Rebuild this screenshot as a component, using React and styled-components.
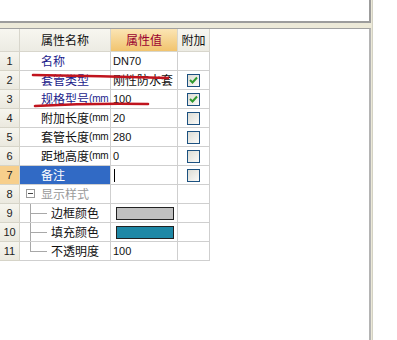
import React from "react";
import styled, { createGlobalStyle } from "styled-components";

const Global = createGlobalStyle`
  html, body { margin: 0; padding: 0; background: #fff; }
  body { width: 397px; height: 340px; overflow: hidden; font-family: "Noto Sans CJK SC", "Liberation Sans", sans-serif; }
`;

const Page = styled.div`
  display: flex;
  width: 397px;
  height: 340px;
  background: #fff;
`;

const LeftCol = styled.div`
  width: 373px;
  display: flex;
  flex-direction: column;
  background: #ece9d8;
  border-right: 1px solid #d4d2c4;
  box-sizing: border-box;
`;

const TopPanel = styled.div`
  height: 23px;
  margin-right: 1px;
  background: #fff;
  border-right: 2px solid #9c9c9c;
  border-bottom: 2px solid #9c9c9c;
  box-sizing: border-box;
`;

const Strip = styled.div`
  height: 5px;
`;

const GridPanel = styled.div`
  position: relative;
  flex: 1;
  margin-right: 1px;
  background: #fff;
  border-top: 1px solid #a0a0a0;
  border-right: 2px solid #b4b4b4;
`;

const Grid = styled.div`
  display: grid;
  grid-template-columns: 20px 91px 67px 32px;
  grid-template-rows: 23px;
  grid-auto-rows: 19px;
  width: 210px;
`;

const Cell = styled.div`
  box-sizing: border-box;
  border-right: 1px solid #cfcfcf;
  border-bottom: 1px solid #cfcfcf;
  font-size: 12px;
  line-height: 18px;
  white-space: nowrap;
  overflow: hidden;
  display: flex;
  align-items: center;
  position: relative;
`;

const HeadCell = styled(Cell)`
  justify-content: center;
  background: ${(p) =>
    p.$active ? "linear-gradient(#fbe5b4, #f1c46e)" : "linear-gradient(#f7f6f0, #ecebe3)"};
  color: ${(p) => (p.$active ? "#9a0030" : "#111")};
  border-right-color: #d8d6cc;
  border-bottom-color: #d8d6cc;
`;

const NumCell = styled(Cell)`
  justify-content: center;
  background: ${(p) => (p.$active ? "#f7cf8c" : "linear-gradient(#f6f5ee, #ebe9df)")};
  color: #222;
  font-family: "Liberation Sans", sans-serif;
  font-size: 11px;
  border-right-color: #d6d4c8;
  border-bottom-color: #d6d4c8;
`;

const NameCell = styled(Cell)`
  padding-left: ${(p) => (p.$indent ? "31px" : "21px")};
  background: ${(p) => (p.$selected ? "#316ac5" : "#fff")};
  color: ${(p) => (p.$selected ? "#fff" : p.$blue ? "#1c1c8c" : p.$muted ? "#9a9a9a" : "#111")};
`;

const Unit = styled.span`
  font-family: "Liberation Sans", sans-serif;
  font-size: 10px;
  letter-spacing: -0.2px;
`;

const ValueCell = styled(Cell)`
  padding-left: 2px;
  color: #111;
  font-family: ${(p) =>
    p.$cjk ? `"Noto Sans CJK SC", sans-serif` : `"Liberation Sans", sans-serif`};
  font-size: ${(p) => (p.$cjk ? "12px" : "11px")};
`;

const ExtraCell = styled(Cell)`
  justify-content: center;
`;

const Check = styled.div`
  width: 13px;
  height: 13px;
  box-sizing: border-box;
  border: 1px solid #1c5180;
  background: linear-gradient(135deg, #dcdcd4, #fafaf8);
  display: flex;
  align-items: center;
  justify-content: center;
`;

const Swatch = styled.div`
  width: 58px;
  height: 13px;
  box-sizing: border-box;
  border: 1px solid #222;
  background: ${(p) => p.$color};
  margin-left: 3px;
`;

const Caret = styled.span`
  width: 1px;
  height: 13px;
  background: #000;
  margin-left: 1px;
`;

const Toggle = styled.span`
  position: absolute;
  left: 6px;
  top: 4px;
  width: 9px;
  height: 9px;
  box-sizing: border-box;
  border: 1px solid #9a9a9a;
  background: #fff;
  &::after {
    content: "";
    position: absolute;
    left: 1px;
    top: 3px;
    width: 5px;
    height: 1px;
    background: #444;
  }
`;

const TreeV = styled.span`
  position: absolute;
  left: 10px;
  top: 0;
  height: ${(p) => (p.$last ? "9px" : "19px")};
  width: 1px;
  background: #a8a8a8;
`;

const TreeH = styled.span`
  position: absolute;
  left: 10px;
  top: 9px;
  width: 17px;
  height: 1px;
  background: #a8a8a8;
`;

const Marks = styled.svg`
  position: absolute;
  left: 0;
  top: 0;
  pointer-events: none;
`;

const CheckMark = () => (
  <svg width="9" height="8" viewBox="0 0 9 8">
    <path d="M1 4 L3.5 6.5 L8 1.5" stroke="#2f9a2f" strokeWidth="2" fill="none" />
  </svg>
);

const rows = [
  { n: 1, name: "名称", value: "DN70", blue: true, check: null },
  { n: 2, name: "套管类型", value: "刚性防水套", cjk: true, blue: true, check: true },
  { n: 3, name: "规格型号", unit: "(mm", value: "100", blue: true, check: true },
  { n: 4, name: "附加长度", unit: "(mm", value: "20", check: false },
  { n: 5, name: "套管长度", unit: "(mm", value: "280", check: false },
  { n: 6, name: "距地高度", unit: "(mm", value: "0", check: false },
  { n: 7, name: "备注", caret: true, selected: true, check: false },
  { n: 8, name: "显示样式", group: true },
  { n: 9, name: "边框颜色", child: true, swatch: "#c0c0c0" },
  { n: 10, name: "填充颜色", child: true, swatch: "#1e88a6" },
  { n: 11, name: "不透明度", child: true, value: "100", last: true },
];

export default function App() {
  return (
    <>
      <Global />
      <Page>
        <LeftCol>
          <TopPanel />
          <Strip />
          <GridPanel>
            <Grid>
              <HeadCell />
              <HeadCell>属性名称</HeadCell>
              <HeadCell $active>属性值</HeadCell>
              <HeadCell>附加</HeadCell>
              {rows.map((r) => (
                <React.Fragment key={r.n}>
                  <NumCell $active={r.selected}>{r.n}</NumCell>
                  <NameCell
                    $blue={r.blue}
                    $selected={r.selected}
                    $muted={r.group}
                    $indent={r.child}
                  >
                    {r.group && <Toggle />}
                    {r.child && (
                      <>
                        <TreeV $last={r.last} />
                        <TreeH />
                      </>
                    )}
                    {r.name}
                    {r.unit && <Unit>{r.unit}</Unit>}
                  </NameCell>
                  <ValueCell $cjk={r.cjk}>
                    {r.swatch ? <Swatch $color={r.swatch} /> : r.value}
                    {r.caret && <Caret />}
                  </ValueCell>
                  <ExtraCell>
                    {r.check !== null && r.check !== undefined && (
                      <Check>{r.check && <CheckMark />}</Check>
                    )}
                  </ExtraCell>
                </React.Fragment>
              ))}
            </Grid>
            <Marks width="210" height="120" viewBox="0 0 210 120">
              <path d="M33 46 Q100 47 168 49" stroke="#c0141e" strokeWidth="2.6" fill="none" strokeLinecap="round" />
              <path d="M35 77 Q90 74 148 75" stroke="#c0141e" strokeWidth="2.6" fill="none" strokeLinecap="round" />
            </Marks>
          </GridPanel>
        </LeftCol>
      </Page>
    </>
  );
}
